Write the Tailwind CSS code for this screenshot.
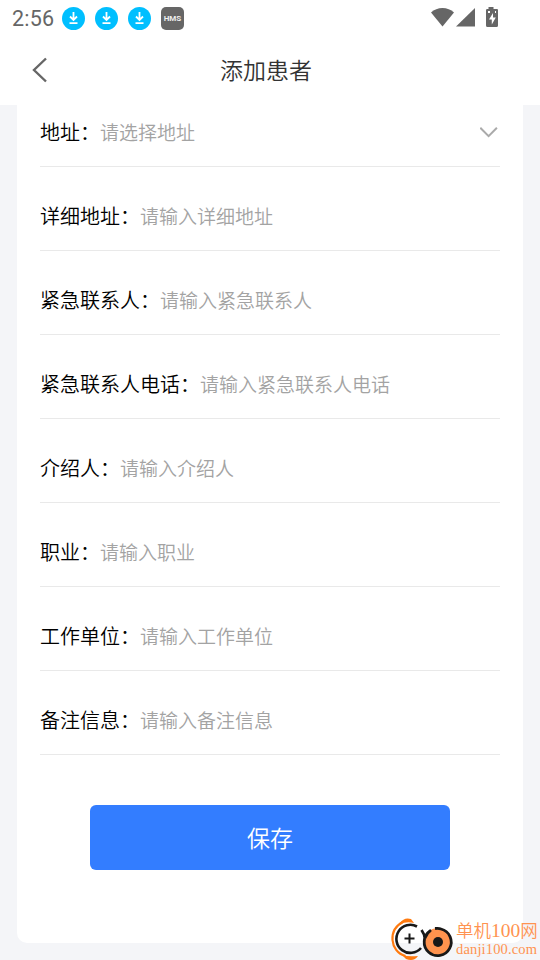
<!DOCTYPE html>
<html lang="zh-CN">
<head>
<meta charset="utf-8">
<title>添加患者</title>
<script src="https://cdn.jsdelivr.net/npm/@tailwindcss/browser@4"></script>
</head>
<body class="w-[540px] h-[960px] overflow-hidden relative flex flex-col bg-[#f4f5f8] font-['Noto_Sans_CJK_SC',sans-serif] font-[350]">
<header class="bg-white h-[105px] shrink-0">
  <div class="h-[37px] flex items-center pl-3 pr-[42px] text-[#666]">
    <span class="font-[Roboto,sans-serif] font-normal text-[21.5px] leading-none w-[50px] whitespace-nowrap tracking-[0.2px]">2:56</span>
    <div class="flex gap-[10px]">
      <svg width="23" height="23" viewBox="0 0 23 23"><circle cx="11.5" cy="11.5" r="11.5" fill="#00bfff"/><path d="M11.5 5v8M8 9.5l3.5 3.5 3.5-3.5M7.5 16.2h8" fill="none" stroke="#fff" stroke-width="1.8"/></svg>
      <svg width="23" height="23" viewBox="0 0 23 23"><circle cx="11.5" cy="11.5" r="11.5" fill="#00bfff"/><path d="M11.5 5v8M8 9.5l3.5 3.5 3.5-3.5M7.5 16.2h8" fill="none" stroke="#fff" stroke-width="1.8"/></svg>
      <svg width="23" height="23" viewBox="0 0 23 23"><circle cx="11.5" cy="11.5" r="11.5" fill="#00bfff"/><path d="M11.5 5v8M8 9.5l3.5 3.5 3.5-3.5M7.5 16.2h8" fill="none" stroke="#fff" stroke-width="1.8"/></svg>
      <span class="w-[23px] h-[23px] rounded-[5px] bg-[#666] text-[#eee] font-[Roboto,sans-serif] font-bold text-[8px] leading-none flex items-center justify-center">HMS</span>
    </div>
    <div class="ml-auto pb-[2px] flex items-center">
      <svg width="67" height="22" viewBox="0 0 67 22" fill="#666"><path d="M0 5.5C6-.5 17-.5 23 5.5L11.5 19.500z"/><path d="M25 19.500L44 1v18.500z"/><path d="M57.500 0h5v2h3.500q1 0 1 1.200v15.300q0 1.500-1.500 1.500h-9q-1.500 0-1.500-1.500V3.200Q55 2 56.200 2h1.300z"/><path d="M62 6l-4 6.500h2.800v5l4-7H62z" fill="#fff"/><path d="M57 4h2v2h-2zM64 4h1v2h-1z" fill="#fff"/></svg>
    </div>
  </div>
  <div class="h-[68px] flex items-center relative">
    <svg class="ml-8 mt-[-3px]" width="16" height="26" viewBox="0 0 16 26" fill="none" stroke="#666" stroke-width="2.4"><path d="M14 1.5L2 13l12 11.5"/></svg>
    <h1 class="absolute inset-x-0 top-[15px] pr-2 text-center text-[23px] leading-[34px] text-[#333] font-[350]">添加患者</h1>
  </div>
</header>
<main class="ml-[17px] w-[506px] h-[838px] shrink-0 bg-white rounded-b-[10px] px-[23px]">
  <div class="h-[62px] border-b border-[#e9e9e9] flex items-end pb-5 text-[20px] leading-7 text-black">地址：<span class="text-[19px] text-[#a3a3a3]">请选择地址</span><svg class="ml-auto mr-0.5 mb-[8px]" width="18" height="12" viewBox="0 0 18 12" fill="none" stroke="#aaa" stroke-width="2"><path d="M.3 1.8L8.600 10.100l8.300-8.300"/></svg></div>
  <div class="h-[84px] border-b border-[#e9e9e9] flex items-end pb-5 text-[20px] leading-7 text-black">详细地址：<span class="text-[19px] text-[#a3a3a3]">请输入详细地址</span></div>
  <div class="h-[84px] border-b border-[#e9e9e9] flex items-end pb-5 text-[20px] leading-7 text-black">紧急联系人：<span class="text-[19px] text-[#a3a3a3]">请输入紧急联系人</span></div>
  <div class="h-[84px] border-b border-[#e9e9e9] flex items-end pb-5 text-[20px] leading-7 text-black">紧急联系人电话：<span class="text-[19px] text-[#a3a3a3]">请输入紧急联系人电话</span></div>
  <div class="h-[84px] border-b border-[#e9e9e9] flex items-end pb-5 text-[20px] leading-7 text-black">介绍人：<span class="text-[19px] text-[#a3a3a3]">请输入介绍人</span></div>
  <div class="h-[84px] border-b border-[#e9e9e9] flex items-end pb-5 text-[20px] leading-7 text-black">职业：<span class="text-[19px] text-[#a3a3a3]">请输入职业</span></div>
  <div class="h-[84px] border-b border-[#e9e9e9] flex items-end pb-5 text-[20px] leading-7 text-black">工作单位：<span class="text-[19px] text-[#a3a3a3]">请输入工作单位</span></div>
  <div class="h-[84px] border-b border-[#e9e9e9] flex items-end pb-5 text-[20px] leading-7 text-black">备注信息：<span class="text-[19px] text-[#a3a3a3]">请输入备注信息</span></div>
  <button class="mt-[50px] mx-auto w-[360px] h-[65px] pb-[2px] flex items-center justify-center rounded-[6px] bg-[#337dff] text-white text-[23px] leading-8 font-[350]">保存</button>
</main>
<aside class="absolute left-[390px] top-[917px] flex text-[#ff9350]">
  <svg width="66" height="43" viewBox="0 0 66 43" fill="none"><path d="M13 5C5 9 2 15 2.500 23c.5 7 5 14 13 16" stroke="#ff7a0f" stroke-width="2.2"/><path d="M10 6Q14 0 21 2l3 4Q17 4 10 7zM12 38Q18 40 28 39 24 45 16 42z" fill="#ff7a0f"/><path d="M27 9.500A14 14 0 1 0 31 31" stroke="#181818" stroke-width="2.6"/><path d="M19.500 16.500v10M14.500 21.500h10" stroke="#181818" stroke-width="2"/><circle cx="48" cy="25" r="14" fill="#ff934e"/><path d="M40 14A13.500 13.500 0 1 0 51 12q-2-1-6-.5M31.500 13q3 4 3.500 9M41 13q-4 3-6 8" stroke="#181818" stroke-width="2.8"/><circle cx="48" cy="25" r="5" fill="#181818"/></svg>
  <div class="whitespace-nowrap pt-px"><div class="flex items-baseline text-[17.5px] leading-[24px] h-[24px]">单机<span class="font-['Liberation_Serif',serif] text-[19.5px]">100</span>网</div><div class="font-['Liberation_Serif',serif] text-[14.5px] leading-[15px] tracking-[0.15px]">danji100.com</div></div>
</aside>
</body>
</html>
